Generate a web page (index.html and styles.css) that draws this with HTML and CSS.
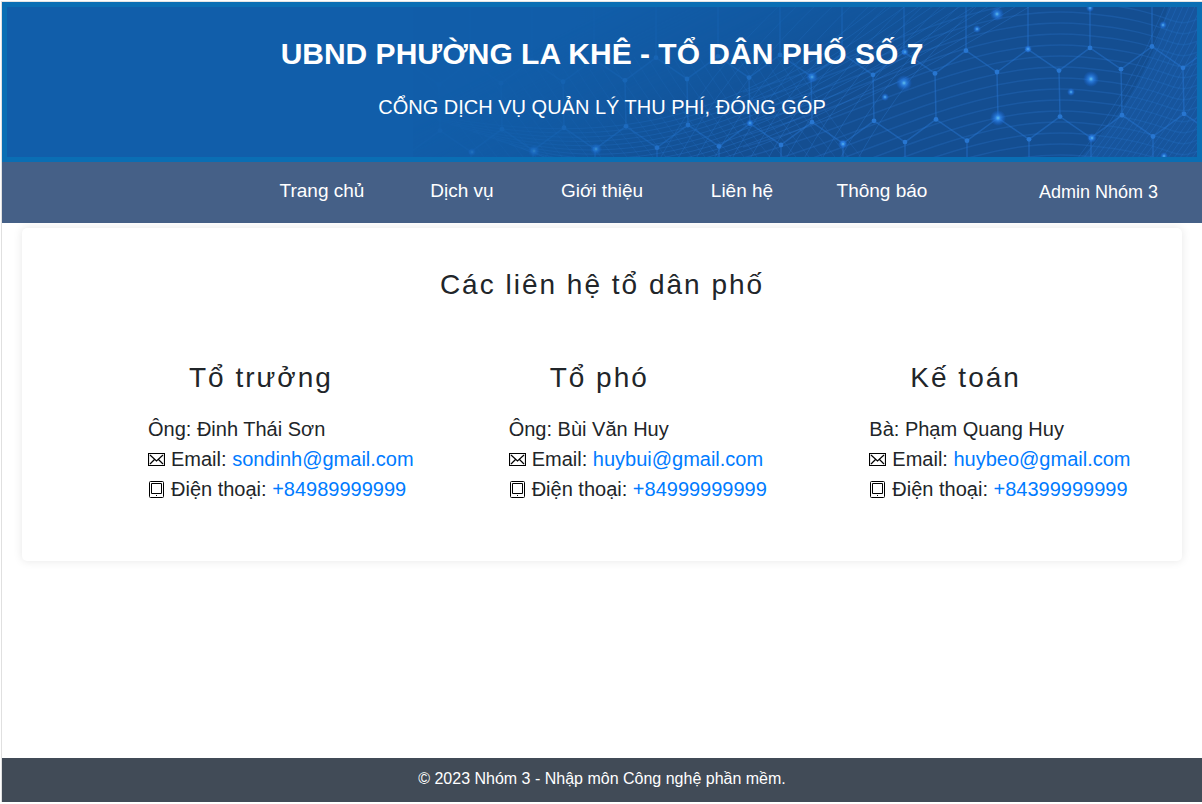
FILE: index.html
```html
<!DOCTYPE html>
<html lang="vi">
<head>
<meta charset="utf-8">
<meta name="viewport" content="width=device-width, initial-scale=1">
<title>Liên hệ - Tổ dân phố số 7</title>
<link rel="stylesheet" href="styles.css">
</head>
<body>
<svg class="sprite" aria-hidden="true">
  <symbol id="icon-mail" viewBox="0 0 17 13">
    <path d="M.5 .5h16v12H.5zM2 2l6.500 6L15 2M2 11l4.500-4.500M15 11l-4.500-4.500" fill="none" stroke="#000" stroke-width="1.200"/>
  </symbol>
  <symbol id="icon-phone" viewBox="0 0 17 17">
    <rect x="1.500" y=".5" width="14" height="16" rx="1" fill="none" stroke="#000"/>
    <path d="M3.500 2.500h10v10h-10z" fill="none" stroke="#000"/>
    <path d="M8 14h1v1H8z"/>
  </symbol>
</svg>
<div class="page">
  <header class="banner">
    <svg class="banner-art" viewBox="0 0 784 150" preserveAspectRatio="xMaxYMid slice" aria-hidden="true">
      <defs>
        <linearGradient id="fade" gradientUnits="userSpaceOnUse" x1="240" y1="-20" x2="350" y2="200">
          <stop offset="0" stop-color="#fff" stop-opacity=".05"/>
          <stop offset=".35" stop-color="#fff" stop-opacity=".35"/>
          <stop offset=".75" stop-color="#fff"/>
        </linearGradient>
        <linearGradient id="side" gradientUnits="userSpaceOnUse" x1="0" y1="0" x2="200" y2="0">
          <stop offset="0" stop-color="#115eaa" stop-opacity=".6"/>
          <stop offset="1" stop-color="#115eaa" stop-opacity="0"/>
        </linearGradient>
        <mask id="reveal" maskUnits="userSpaceOnUse" x="0" y="0" width="784" height="150">
          <rect width="784" height="150" fill="url(#fade)"/>
        </mask>
        <radialGradient id="glow">
          <stop offset="0" stop-color="#62c0ee"/>
          <stop offset=".3" stop-color="#2f86e8" stop-opacity=".85"/>
          <stop offset="1" stop-color="#1766e0" stop-opacity="0"/>
        </radialGradient>
      </defs>
      <g mask="url(#reveal)">
        <rect width="784" height="150" fill="#144e91"/>
        <g id="waves" fill="none" stroke="#2a78d0"></g>
        <g id="cells" fill="none" stroke="#2878d4"></g>
        <rect width="200" height="150" fill="url(#side)"/>
        <g id="sparks" fill="url(#glow)"></g>
      </g>
    </svg>
    <div class="banner-text">
      <h1 class="banner-title">UBND PHƯỜNG LA KHÊ - TỔ DÂN PHỐ SỐ 7</h1>
      <p class="banner-subtitle">CỔNG DỊCH VỤ QUẢN LÝ THU PHÍ, ĐÓNG GÓP</p>
    </div>
  </header>
  <nav class="menu">
    <ul class="menu-list">
      <li><a href="#">Trang chủ</a></li>
      <li><a href="#">Dịch vụ</a></li>
      <li><a href="#">Giới thiệu</a></li>
      <li><a href="#">Liên hệ</a></li>
      <li><a href="#">Thông báo</a></li>
    </ul>
    <a class="menu-user" href="#">Admin Nhóm 3</a>
  </nav>
  <main class="content">
    <section class="card">
      <h2 class="heading card-title">Các liên hệ tổ dân phố</h2>
      <div class="contacts">
        <article>
          <h3 class="heading contact-role">Tổ trưởng</h3>
          <p class="line">Ông: Đinh Thái Sơn</p>
          <p class="line"><svg class="icon icon-mail"><use href="#icon-mail"/></svg>Email: <a href="mailto:sondinh@gmail.com">sondinh@gmail.com</a></p>
          <p class="line"><svg class="icon icon-phone"><use href="#icon-phone"/></svg>Điện thoại: <a href="tel:+84989999999">+84989999999</a></p>
        </article>
        <article>
          <h3 class="heading contact-role">Tổ phó</h3>
          <p class="line">Ông: Bùi Văn Huy</p>
          <p class="line"><svg class="icon icon-mail"><use href="#icon-mail"/></svg>Email: <a href="mailto:huybui@gmail.com">huybui@gmail.com</a></p>
          <p class="line"><svg class="icon icon-phone"><use href="#icon-phone"/></svg>Điện thoại: <a href="tel:+84999999999">+84999999999</a></p>
        </article>
        <article>
          <h3 class="heading contact-role">Kế toán</h3>
          <p class="line">Bà: Phạm Quang Huy</p>
          <p class="line"><svg class="icon icon-mail"><use href="#icon-mail"/></svg>Email: <a href="mailto:huybeo@gmail.com">huybeo@gmail.com</a></p>
          <p class="line"><svg class="icon icon-phone"><use href="#icon-phone"/></svg>Điện thoại: <a href="tel:+84399999999">+84399999999</a></p>
        </article>
      </div>
    </section>
  </main>
  <footer class="footer">© 2023 Nhóm 3 - Nhập môn Công nghệ phần mềm.</footer>
</div>
<script src="banner.js"></script>
</body>
</html>
```

FILE: styles.css
```css
* {
  box-sizing: border-box;
}

body {
  margin: 0;
  min-height: 100vh;
  display: flex;
  flex-direction: column;
  padding: 1px 0 2px 1px;
  background: #fff;
  color: #212529;
  font-family: "Liberation Sans", Arial, sans-serif;
  font-size: 20px;
  line-height: 30px;
}

h1, h2, h3, p, ul {
  margin: 0;
  padding: 0;
}

a {
  color: #007bff;
  text-decoration: none;
}

.sprite {
  position: absolute;
  width: 0;
  height: 0;
}

.page {
  flex: 1;
  display: flex;
  flex-direction: column;
  border-top: 1px solid #e4e4e4;
  border-left: 1px solid #e0e0e0;
}

.banner {
  position: relative;
  border: 5px solid #0a6eb4;
  background: #115eaa;
  color: #fff;
  text-align: center;
}

.banner-art {
  position: absolute;
  top: 0;
  right: 0;
  width: 784px;
  max-width: 100%;
  height: 100%;
}

.banner-text {
  position: relative;
  display: flex;
  flex-direction: column;
  gap: 23px;
  padding: 29px 20px 38px;
}

.banner-title {
  font-size: 30px;
  line-height: 36px;
}

.banner-subtitle {
  font-size: 20px;
  line-height: 24px;
}

.menu {
  display: grid;
  grid-template-columns: 1fr auto 1fr;
  align-items: start;
  padding: 15px 0 16px;
  background: #456087;
}

.menu a {
  color: #fff;
}

.menu-list {
  grid-column: 2;
  display: grid;
  grid-template-columns: repeat(5, 140px);
  list-style: none;
  text-align: center;
  font-size: 19px;
  line-height: 28px;
}

.menu-user {
  justify-self: end;
  padding-right: 44px;
  font-size: 18px;
}

.content {
  flex: 1;
  padding: 5px 20px;
}

.card {
  padding: 40px 0 57px;
  border-radius: 5px;
  background: #fff;
  box-shadow: 0 0 10px rgba(0, 0, 0, 0.1);
}

.heading {
  font-size: 28px;
  font-weight: 400;
  line-height: 34px;
  letter-spacing: 2px;
}

.card-title {
  margin-bottom: 59px;
  text-align: center;
}

.contacts {
  display: grid;
  grid-template-columns: repeat(3, 1fr);
  gap: 48px;
  padding-left: 126px;
}

.contact-role {
  margin-bottom: 19px;
  padding-left: 41px;
}

.line {
  white-space: nowrap;
}

.icon {
  width: 17px;
  margin-right: 6px;
}

.icon-mail {
  height: 13px;
}

.icon-phone {
  height: 17px;
  vertical-align: -2px;
}

.footer {
  padding: 9px 20px 11px;
  background: #414b57;
  color: #fff;
  font-size: 16px;
  line-height: 24px;
  text-align: center;
}
```

FILE: banner.js
```js
const NS = "http://www.w3.org/2000/svg";

function add(parent, tag, attrs) {
  const node = document.createElementNS(NS, tag);
  for (const key in attrs) node.setAttribute(key, attrs[key]);
  parent.appendChild(node);
}

const waves = document.getElementById("waves");
const cells = document.getElementById("cells");
const sparks = document.getElementById("sparks");

// Flowing arcs across the right half
for (let i = 0; i < 18; i++) {
  const y = i * 11;
  add(waves, "path", {
    d: `M330 ${y + 85} C460 ${y + 50} 560 ${y - 15} 670 ${y - 5} S750 ${y + 30} 800 ${y + 5}`,
    "stroke-width": 1.5,
    opacity: 0.28
  });
}

// Broad curves rising from the lower left
for (let i = 0; i < 12; i++) {
  add(waves, "path", {
    d: `M${i * 12} ${105 + i * 4} C200 ${145 + i * 4} 320 ${115 + i * 6} ${470 + i * 14} -5`,
    opacity: 0.35
  });
}

// Falling strands on the left
for (let i = 0; i < 30; i++) {
  const x = i * 13;
  add(waves, "path", { d: `M${x} 50 Q${x + 30} 100 ${x + 75} 155`, opacity: 0.25 });
}

// Rising strands in the middle
for (let i = 0; i < 12; i++) {
  const x = 245 + i * 18;
  add(waves, "path", { d: `M${x} 155 Q${x + 50} 65 ${x + 125} -5`, opacity: 0.35 });
}

// Tight sheaf at the right edge
add(waves, "path", { d: "M668 150 Q730 90 755 0H784V150Z", fill: "#1d64b4", stroke: "none", opacity: 0.35 });
for (let i = 0; i < 26; i++) {
  const x = 662 + i * 6;
  add(waves, "path", { d: `M${x} 155 Q${x + 55} 85 ${x + 92} -5`, opacity: 0.3 });
}

// Honeycomb: the rows rise slightly towards the right
function level(x, y) {
  return y - (x - 584) * 0.0225;
}
for (let col = -10; col < 5; col++) {
  const a = 584 + col * 62;
  const b = a + 31;
  const p = [
    [b, level(b, 43)], [a, level(a, 65)], [a + 1, level(a, 111)],
    [b + 1, level(b, 133)], [b + 1, level(b, 179)]
  ];
  add(cells, "path", {
    d: `M${b} -5 L${p.map(q => q.join(" ")).join(" L")}`,
    "stroke-width": 1.5,
    opacity: 0.45
  });
  add(cells, "path", {
    d: `M${b - 62} ${level(b - 62, 43)} L${p[1].join(" ")} M${b - 61} ${level(b - 62, 133)} L${p[2].join(" ")}`,
    "stroke-width": 1.5,
    opacity: 0.45
  });
  for (const q of p.slice(0, 4)) {
    add(cells, "circle", { cx: q[0], cy: q[1], r: 2.4, fill: "#2876d0", stroke: "none" });
  }
}

// Glowing points: x, y, radius
[
  [584, 7, 7], [564, 22, 4], [491, 76, 8], [472, 90, 4],
  [585, 111, 8], [678, 72, 8], [658, 85, 4], [750, 18, 4],
  [615, 42, 4], [679, 131, 5], [430, 137, 5], [399, 70, 6],
  [121, 144, 6], [183, 142, 6], [59, 145, 4], [492, 45, 4],
  [677, 1, 4], [751, 149, 4], [337, 116, 4]
].forEach(([cx, cy, r]) => add(sparks, "circle", { cx, cy, r }));
```
